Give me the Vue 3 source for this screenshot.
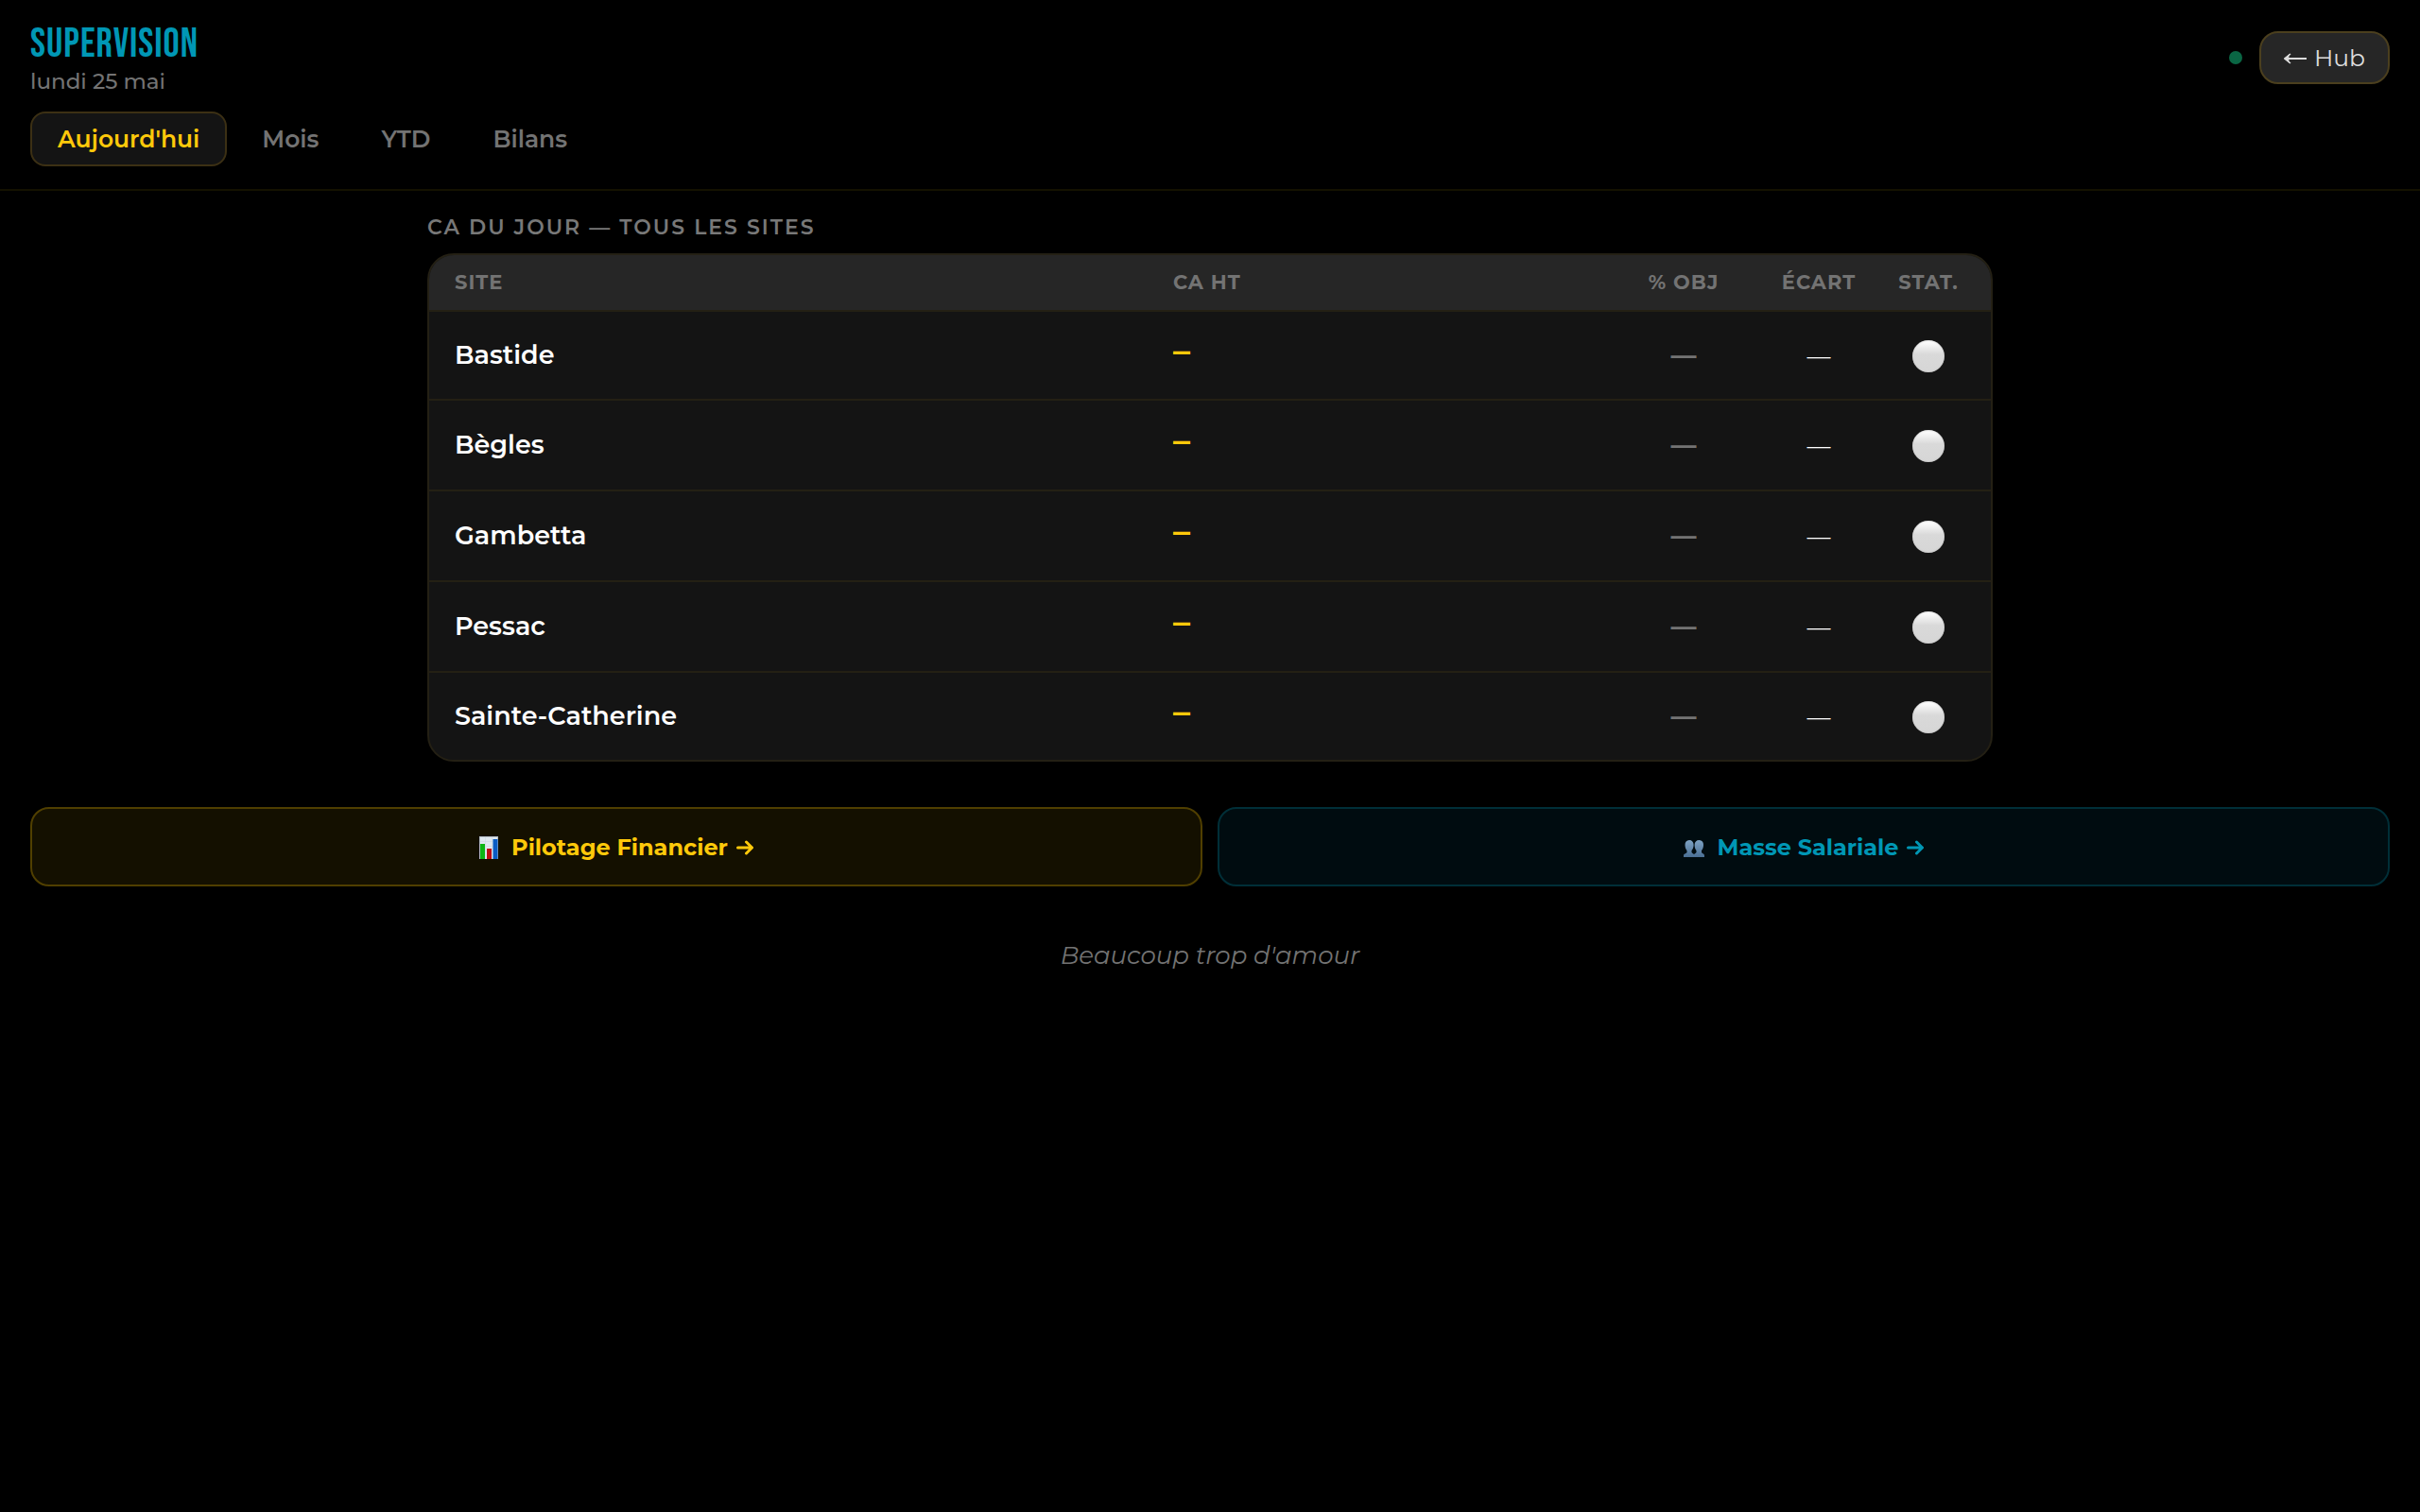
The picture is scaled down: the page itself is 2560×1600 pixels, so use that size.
<script setup>
import { ref } from 'vue'

const tabs = ["Aujourd'hui", 'Mois', 'YTD', 'Bilans']
const active = ref(tabs[0])
const sites = ['Bastide', 'Bègles', 'Gambetta', 'Pessac', 'Sainte-Catherine']
</script>

<template>
  <div class="page">
    <header class="header">
      <div class="topbar">
        <div>
          <h1 class="title">SUPERVISION</h1>
          <p class="date">lundi 25 mai</p>
        </div>
        <div class="actions">
          <span class="live"></span>
          <button class="hub" type="button">
            <svg class="back" viewBox="0 0 24 20" aria-hidden="true">
              <path d="M2 11H24" stroke="currentColor" stroke-width="2" fill="none" />
              <path d="M0 11L6 6L5 11L6 16Z" fill="currentColor" />
              <path d="M7 6L1 11L7 16" stroke="currentColor" stroke-width="1.5" fill="none" />
            </svg>
            Hub
          </button>
        </div>
      </div>
      <nav class="tabs">
        <button
          v-for="tab in tabs"
          :key="tab"
          type="button"
          class="tab"
          :class="{ active: tab === active }"
          @click="active = tab"
        >{{ tab }}</button>
      </nav>
    </header>

    <main>
      <section class="sites">
        <h2 class="section-title">CA DU JOUR — TOUS LES SITES</h2>
        <div class="card">
          <table>
            <colgroup>
              <col class="c-site" />
              <col />
              <col class="c-obj" />
              <col class="c-gap" />
              <col class="c-stat" />
            </colgroup>
            <thead>
              <tr>
                <th>SITE</th>
                <th>CA HT</th>
                <th class="mid">% OBJ</th>
                <th class="mid">ÉCART</th>
                <th class="mid">STAT.</th>
              </tr>
            </thead>
            <tbody>
              <tr v-for="site in sites" :key="site">
                <td class="name">{{ site }}</td>
                <td class="revenue">—</td>
                <td class="mid objective">—</td>
                <td class="mid gap">—</td>
                <td class="mid"><span class="status"></span></td>
              </tr>
            </tbody>
          </table>
        </div>
      </section>

      <nav class="links">
        <a class="link gold" href="#pilotage">
          <svg class="icon chart" viewBox="0 0 20 24" aria-hidden="true">
            <rect width="20" height="24" fill="#dfe8f0" />
            <path d="M0 .5H20M.5 0V24M19.5 0V24" stroke="#b4bcc6" />
            <path d="M1 5.500H19M1 10.500H19M1 15.500H19M6.500 1V24M13.500 1V24" stroke="#cdd8e3" stroke-width=".6" />
            <rect x="1" y="8" width="5" height="16" fill="#0bb514" />
            <rect x="8" y="13" width="5" height="11" fill="#bd0c12" />
            <rect x="14.500" y="3" width="5" height="21" fill="#0a5cc4" />
          </svg>
          <span>Pilotage Financier</span>
          <svg class="arrow" viewBox="0 0 18 18" aria-hidden="true"><path d="M1.500 9H16M10.500 3L16.500 9L10.500 15" /></svg>
        </a>
        <a class="link teal" href="#masse">
          <svg class="icon people" viewBox="0 0 22 18" aria-hidden="true">
            <defs>
              <linearGradient id="bust" x1="0" y1="0" x2="0" y2="1">
                <stop offset="0" stop-color="#7ea3c4" />
                <stop offset="1" stop-color="#4a6f94" />
              </linearGradient>
            </defs>
            <path fill="url(#bust)" d="M6 0C8.800 0 10.600 2 10.600 5C10.600 8 9.500 10 8.500 11V13C9 14 10 14.200 11 15C12 14.200 13 14 13.500 13V11C12.500 10 11.600 8 11.600 5C11.600 2 13.500 0 16.500 0C19.500 0 21 2.200 21 5C21 8 20 10 19 11V13C19.500 14.500 22 14 22 16.500V18H0V16.500C0 14 3 14.500 3.500 13V11C2.500 10 1.500 8 1.500 5C1.500 2.200 3 0 6 0Z" />
          </svg>
          <span>Masse Salariale</span>
          <svg class="arrow" viewBox="0 0 18 18" aria-hidden="true"><path d="M1.500 9H16M10.500 3L16.500 9L10.500 15" /></svg>
        </a>
      </nav>
    </main>

    <footer class="footer">Beaucoup trop d'amour</footer>
  </div>
</template>

<style>
body {
  margin: 0;
  background: #000;
}
</style>

<style scoped>
.page {
  min-height: 100vh;
  background: #000;
  color: #fff;
  font-family: Montserrat, Inter, sans-serif;
}
.header {
  padding: 22px 32px 24px;
  border-bottom: 2px solid #141100;
}
.topbar {
  display: flex;
  justify-content: space-between;
  align-items: center;
  margin-bottom: 18px;
}
.title {
  margin: 0;
  font: 400 43px/50px "Bebas Neue", "Liberation Sans Narrow", "Liberation Sans", sans-serif;
  letter-spacing: 1px;
  color: #0097b5;
}
.date {
  margin: 0;
  font-size: 23px;
  font-weight: 500;
  line-height: 28px;
  color: #737373;
}
.actions {
  display: flex;
  align-items: center;
  gap: 18px;
}
.live {
  width: 14px;
  height: 14px;
  border-radius: 50%;
  background: #0a6644;
}
.hub {
  display: flex;
  align-items: center;
  gap: 8px;
  padding: 0 24px;
  border: 2px solid #4b3f1e;
  border-radius: 20px;
  background: #262626;
  color: #dcdcdc;
  font: inherit;
  font-size: 25px;
  line-height: 52px;
}
.back {
  width: 24px;
  height: 20px;
}
.tabs {
  display: flex;
  gap: 8px;
}
.tab {
  padding: 0 27px;
  border: 2px solid transparent;
  border-radius: 16px;
  background: none;
  color: #737373;
  font: inherit;
  font-size: 25px;
  font-weight: 600;
  line-height: 54px;
}
.tab.active {
  border-color: #3c3014;
  background: #141414;
  color: #ffc90a;
}
.sites {
  box-sizing: border-box;
  max-width: 1720px;
  margin: 0 auto;
  padding: 24px 32px 0;
}
.section-title {
  margin: 0 0 12px;
  font-size: 22px;
  font-weight: 600;
  line-height: 30px;
  letter-spacing: 2px;
  color: #787878;
}
.card {
  overflow: hidden;
  border: 2px solid #242014;
  border-radius: 28px;
  background: #141414;
}
table {
  width: 100%;
  table-layout: fixed;
  border-spacing: 0;
}
.c-site {
  width: 46%;
}
.c-obj {
  width: 186px;
}
.c-gap {
  width: 100px;
}
.c-stat {
  width: 132px;
}
th {
  height: 58px;
  padding: 0 27px;
  border-bottom: 2px solid #242014;
  background: #262626;
  color: #737373;
  font-size: 21px;
  font-weight: 700;
  line-height: 28px;
  letter-spacing: 1px;
  text-align: left;
}
td {
  height: 94px;
  padding: 0 27px;
  border-bottom: 2px solid #242014;
  line-height: 34px;
}
tr:first-child td,
tr:last-child td {
  height: 92px;
}
tr:last-child td {
  border-bottom: 0;
}
.mid {
  padding: 0;
  text-align: center;
}
.name {
  font-size: 27px;
  font-weight: 600;
  line-height: 36px;
}
.revenue {
  font-family: "Bebas Neue", Inter, sans-serif;
  font-size: 36px;
  color: #ffc90a;
}
.objective {
  font-size: 27px;
  font-weight: 700;
  color: #737373;
}
.gap {
  font-size: 25px;
}
.status {
  display: block;
  width: 34px;
  height: 34px;
  margin: 2px auto 0;
  border-radius: 50%;
  background: linear-gradient(#fafafa 8%, #d9d9d9 44%, #d6d6d6);
  box-shadow: inset 0 0 2px #b8b8b8;
}
.links {
  display: grid;
  grid-template-columns: 1fr 1fr;
  gap: 16px;
  padding: 48px 32px 0;
}
.link {
  display: flex;
  justify-content: center;
  align-items: center;
  padding-top: 2px;
  border: 2px solid;
  border-radius: 20px;
  font-size: 24px;
  font-weight: 700;
  line-height: 78px;
  text-decoration: none;
}
.gold {
  border-color: #503f00;
  background: #141000;
  color: #ffc90a;
}
.teal {
  border-color: #002f38;
  background: #000c10;
  color: #0097b5;
}
.icon {
  margin-right: 14px;
}
.chart {
  width: 20px;
  height: 24px;
}
.people {
  width: 22px;
  height: 18px;
  padding-top: 2px;
}
.arrow {
  width: 18px;
  height: 18px;
  margin-left: 9px;
  fill: none;
  stroke: currentColor;
  stroke-width: 3;
  stroke-linecap: round;
  stroke-linejoin: round;
}
.footer {
  padding: 56px 32px;
  color: #737373;
  font-size: 26px;
  font-style: italic;
  line-height: 34px;
  text-align: center;
}
</style>
